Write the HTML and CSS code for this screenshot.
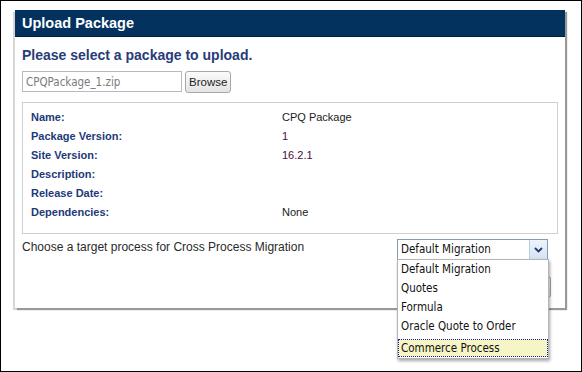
FILE: index.html
```html
<!DOCTYPE html>
<html>
<head>
  <title>Upload Package</title>
  <link rel="stylesheet" href="styles.css">
</head>
<body>
  <div class="frame">
    <div class="dialog">
      <div class="dialog-title">Upload Package</div>
      <div class="dialog-body">
        <h2 class="prompt">Please select a package to upload.</h2>

        <div class="file-row">
          <input type="text" class="file-name" value="CPQPackage_1.zip" readonly>
          <button class="browse">Browse</button>
        </div>

        <div class="info-box">
          <div class="info-grid">
            <span class="label">Name:</span><span class="value">CPQ Package</span>
            <span class="label">Package Version:</span><span class="value num">1</span>
            <span class="label">Site Version:</span><span class="value num">16.2.1</span>
            <span class="label">Description:</span><span class="value"></span>
            <span class="label">Release Date:</span><span class="value"></span>
            <span class="label">Dependencies:</span><span class="value">None</span>
          </div>
        </div>

        <div class="target-row">
          <span class="target-text">Choose a target process for Cross Process Migration</span>
          <div class="select-wrap">
            <div class="select">
              <span class="select-value">Default Migration</span>
              <span class="select-arrow">
                <svg width="9" height="6" viewBox="0 0 9 6"><path d="M1 1 L4.5 4.5 L8 1" fill="none" stroke="#1d3c6e" stroke-width="1.8"/></svg>
              </span>
            </div>
            <ul class="options">
              <li>Default Migration</li>
              <li>Quotes</li>
              <li>Formula</li>
              <li>Oracle Quote to Order</li>
              <li class="active">Commerce Process</li>
            </ul>
          </div>
        </div>

        <div class="actions">
          <button class="upload">Upload</button>
        </div>
      </div>
    </div>
  </div>
</body>
</html>
```

FILE: styles.css
```css
html, body {
  margin: 0;
  padding: 0;
  background-color: #fff;
}

.frame {
  width: 582px;
  height: 372px;
  box-sizing: border-box;
  border: 1px solid #000;
  padding: 9px 0 0 14px;
  font-family: "Liberation Sans", Arial, sans-serif;
}

.dialog {
  width: 550px;
  background-color: #fff;
  box-shadow: 2px 2px 1px #999, -2px 2px 0 #d6d6d6;
}

.dialog-title {
  height: 26px;
  line-height: 27px;
  padding-left: 7px;
  background-color: #03325f;
  border-bottom: 1px solid #01203f;
  color: #fff;
  font-size: 14.5px;
  font-weight: bold;
}

.dialog-body {
  padding: 9px 7px 10px 7px;
}

.prompt {
  margin: 0;
  font-size: 14px;
  line-height: 18px;
  color: #283c78;
}

.file-row {
  display: flex;
  gap: 3px;
  margin-top: 7px;
}

.file-name {
  width: 160px;
  height: 21px;
  box-sizing: border-box;
  margin: 0;
  padding: 0 3px;
  border: 1px solid #b9b9c4;
  font-family: "DejaVu Sans Condensed", "Liberation Sans", sans-serif;
  font-size: 11.5px;
  color: #7a7a7a;
  outline: none;
}

.browse {
  height: 22px;
  margin: 0;
  padding: 0 3px;
  border: 1px solid #a8a8a8;
  border-radius: 3px;
  background: linear-gradient(#fbfbfb, #e4e4e4);
  font-family: "Liberation Sans", Arial, sans-serif;
  font-size: 11.5px;
  color: #222;
}

.info-box {
  margin-top: 9px;
  border: 1px solid #cfcfcf;
  padding: 4px 8px 12px 8px;
}

.info-grid {
  display: grid;
  grid-template-columns: 251px 1fr;
  grid-auto-rows: 19px;
  align-items: center;
  font-size: 11px;
}

.label {
  font-weight: bold;
  color: #1e3a78;
}

.value {
  color: #222;
}

.value.num {
  color: #4a0a3a;
}

.target-row {
  display: flex;
  justify-content: space-between;
  align-items: flex-start;
  margin-top: 5px;
  padding-right: 10px;
}

.target-text {
  font-size: 12px;
  line-height: 18px;
  margin-top: -1px;
  color: #2a2a2a;
}

.select-wrap {
  position: relative;
  width: 151px;
}

.select {
  display: flex;
  height: 21px;
  box-sizing: border-box;
  border: 1px solid #7f9db9;
  font-family: "DejaVu Sans Condensed", "Liberation Sans", sans-serif;
  font-size: 11.5px;
  color: #111;
}

.select-value {
  flex: 1;
  padding-left: 3px;
  line-height: 19px;
}

.select-arrow {
  width: 17px;
  display: flex;
  align-items: center;
  justify-content: center;
  border-left: 1px solid #b9cde4;
  background: linear-gradient(#eef4fc, #d4e2f4);
}

.options {
  position: absolute;
  top: 20px;
  left: 0;
  width: 152px;
  box-sizing: border-box;
  margin: 0;
  padding: 0 0 1px 0;
  list-style: none;
  background-color: #fff;
  border: 1px solid #b5b5b5;
  box-shadow: 1px 2px 3px rgba(0, 0, 0, 0.35);
  font-family: "DejaVu Sans Condensed", "Liberation Sans", sans-serif;
  font-size: 11.5px;
  color: #111;
  z-index: 2;
}

.options li {
  height: 19px;
  line-height: 19px;
  padding-left: 3px;
}

.options li.active {
  height: 18px;
  line-height: 16px;
  margin-top: 3px;
  padding-left: 2px;
  box-sizing: border-box;
  border: 1px dotted #1a1aa0;
  background-color: #f5f5c6;
}

.actions {
  display: flex;
  justify-content: flex-end;
  margin-top: 16px;
  padding-right: 7px;
}

.upload {
  height: 22px;
  margin: 0;
  padding: 0 8px;
  border: 1px solid #a8a8a8;
  border-radius: 3px;
  background: linear-gradient(#fbfbfb, #e4e4e4);
  font-family: "Liberation Sans", Arial, sans-serif;
  font-size: 12px;
  color: #222;
}
```
